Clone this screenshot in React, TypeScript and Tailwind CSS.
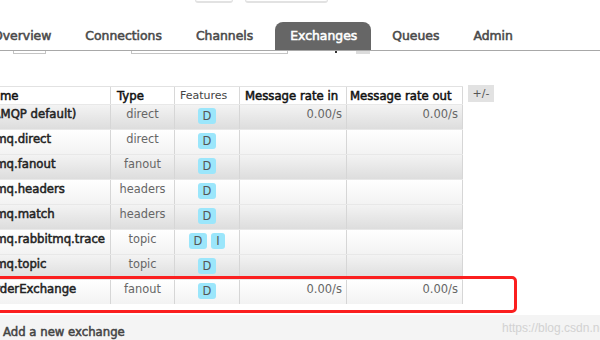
const rows = [
  { name: "(AMQP default)", type: "direct", features: ["D"], rateIn: "0.00/s", rateOut: "0.00/s" },
  { name: "amq.direct", type: "direct", features: ["D"], rateIn: "", rateOut: "" },
  { name: "amq.fanout", type: "fanout", features: ["D"], rateIn: "", rateOut: "" },
  { name: "amq.headers", type: "headers", features: ["D"], rateIn: "", rateOut: "" },
  { name: "amq.match", type: "headers", features: ["D"], rateIn: "", rateOut: "" },
  { name: "amq.rabbitmq.trace", type: "topic", features: ["D", "I"], rateIn: "", rateOut: "" },
  { name: "amq.topic", type: "topic", features: ["D"], rateIn: "", rateOut: "" },
  { name: "orderExchange", type: "fanout", features: ["D"], rateIn: "0.00/s", rateOut: "0.00/s" },
];

const tabs = ["Overview", "Connections", "Channels", "Exchanges", "Queues", "Admin"];

function Tab({ label }: { label: string }) {
  if (label === "Exchanges") {
    return (
      <div className="ml-[5px] pl-[15px] pr-[14px] pt-[1px] flex items-center h-full bg-[#666666] text-white rounded-t-[8px]">
        {label}
      </div>
    );
  }
  return (
    <div className={`px-[17px] pt-[1px] flex items-center h-full text-[#4a4a4a] ${label === "Queues" ? "ml-[4px]" : ""}`}>
      {label}
    </div>
  );
}

export default function App() {
  return (
    <div className="relative w-[600px] h-[340px] overflow-hidden bg-white font-['DejaVu_Sans',sans-serif]">
      {/* top input edges */}
      <div className="flex h-[3px]">
        <div className="ml-[195px] w-[38px] h-[3px] border-x border-b-2 border-[#e2e2e2] rounded-b-[5px]" />
        <div className="ml-[12px] w-[83px] h-[3px] border-x border-b-2 border-[#e2e2e2] rounded-b-[5px]" />
      </div>

      {/* nav tabs */}
      <nav className="mt-[19px] h-[29px] flex border-b border-[#a8a8a8] text-[12.4px] [-webkit-text-stroke:0.55px]">
        <div className="flex h-full -ml-[24px] whitespace-nowrap">
          {tabs.map((t) => (
            <Tab key={t} label={t} />
          ))}
        </div>
      </nav>

      {/* submenu edges */}
      <div className="flex h-[3px]">
        <div className="ml-[13px] w-[33px] h-[3px] border-x border-b border-[#c4c4c4]" />
        <div className="ml-[85px] w-[157px] h-[3px] border-x border-b border-[#c4c4c4]" />
        <div className="ml-[47px] w-[2px] h-[2px] bg-[#333]" />
        <div className="ml-[19px] w-[14px] h-[3px] bg-[#dcdcdc]" />
      </div>

      {/* table */}
      <div className="mt-[32px] flex items-start">
        <div className="-ml-[16px] w-[479px]">
          <div className="flex h-[18px] bg-white border-t border-[#e2e2e2] text-[11.7px] leading-[16px] whitespace-nowrap">
            <div className="w-[127px] flex items-center border-r border-[#d8d8d8] text-[#111] [-webkit-text-stroke:0.5px]">Name</div>
            <div className="w-[64px] pl-[6px] flex items-center border-r border-[#d8d8d8] text-[#111] [-webkit-text-stroke:0.5px]">Type</div>
            <div className="w-[65px] pl-[5px] flex items-center border-r border-[#d8d8d8] text-[#444] text-[11px]">Features</div>
            <div className="w-[107px] pl-[5px] flex items-center border-r border-[#d8d8d8] text-[#111] [-webkit-text-stroke:0.5px]">Message rate in</div>
            <div className="w-[116px] pl-[3px] flex items-center border-r border-[#d8d8d8] text-[#111] [-webkit-text-stroke:0.5px]">Message rate out</div>
          </div>
          {rows.map((r, i) => (
            <div
              key={r.name}
              className={`flex h-[25px] border-t border-[#e8e8e8] whitespace-nowrap ${
                i % 2 === 0
                  ? "bg-gradient-to-b from-[#f3f3f3] to-[#dddddd]"
                  : "bg-gradient-to-b from-white to-[#f3f3f3]"
              }`}
            >
              <div className="w-[127px] pl-[4px] pt-[1px] border-r border-[#d6d6d6] text-[11.7px] leading-[16px] text-[#222] [-webkit-text-stroke:0.5px]">
                {r.name}
              </div>
              <div className="w-[64px] pt-[1px] text-center border-r border-[#d6d6d6] text-[11.4px] leading-[16px] text-[#666]">
                {r.type}
              </div>
              <div className="w-[65px] flex justify-center gap-[4px] pt-[3px] border-r border-[#d6d6d6]">
                {r.features.map((f) => (
                  <span
                    key={f}
                    className={`h-[16px] ${f === "I" ? "w-[14px]" : "w-[18px]"} rounded-[3px] bg-[#9be6fb] text-[11.5px] leading-[16px] text-[#555] text-center`}
                  >
                    {f}
                  </span>
                ))}
              </div>
              <div className="w-[107px] pr-[4px] pt-[1px] text-right border-r border-[#d6d6d6] text-[11.5px] leading-[16px] text-[#666]">
                {r.rateIn}
              </div>
              <div className="w-[116px] pr-[4px] pt-[1px] text-right border-r border-[#d6d6d6] text-[11.5px] leading-[16px] text-[#666]">
                {r.rateOut}
              </div>
            </div>
          ))}
        </div>
        <div className="ml-[5px] -mt-[1px] w-[26px] h-[17px] bg-[#e2e2e2] text-[11px] leading-[17px] text-[#555] text-center">
          +/-
        </div>
      </div>

      {/* add new exchange */}
      <div className="relative mt-[11px] h-[30px] bg-[#f4f4f4] pl-[3px] pt-[4px]">
        <span className="text-[11.7px] leading-[16px] text-[#444] [-webkit-text-stroke:0.5px] whitespace-nowrap">
          Add a new exchange
        </span>
        <span className="absolute left-[502px] top-[5px] font-['Liberation_Sans',sans-serif] text-[12px] leading-[16px] text-[#d2d2d2] whitespace-nowrap">
          https://blog.csdn.net
        </span>
      </div>

      {/* red annotation */}
      <div className="absolute -left-[6px] top-[276px] w-[523px] h-[37px] border-[3px] border-[#fb1f1f] rounded-[5px]" />
    </div>
  );
}
